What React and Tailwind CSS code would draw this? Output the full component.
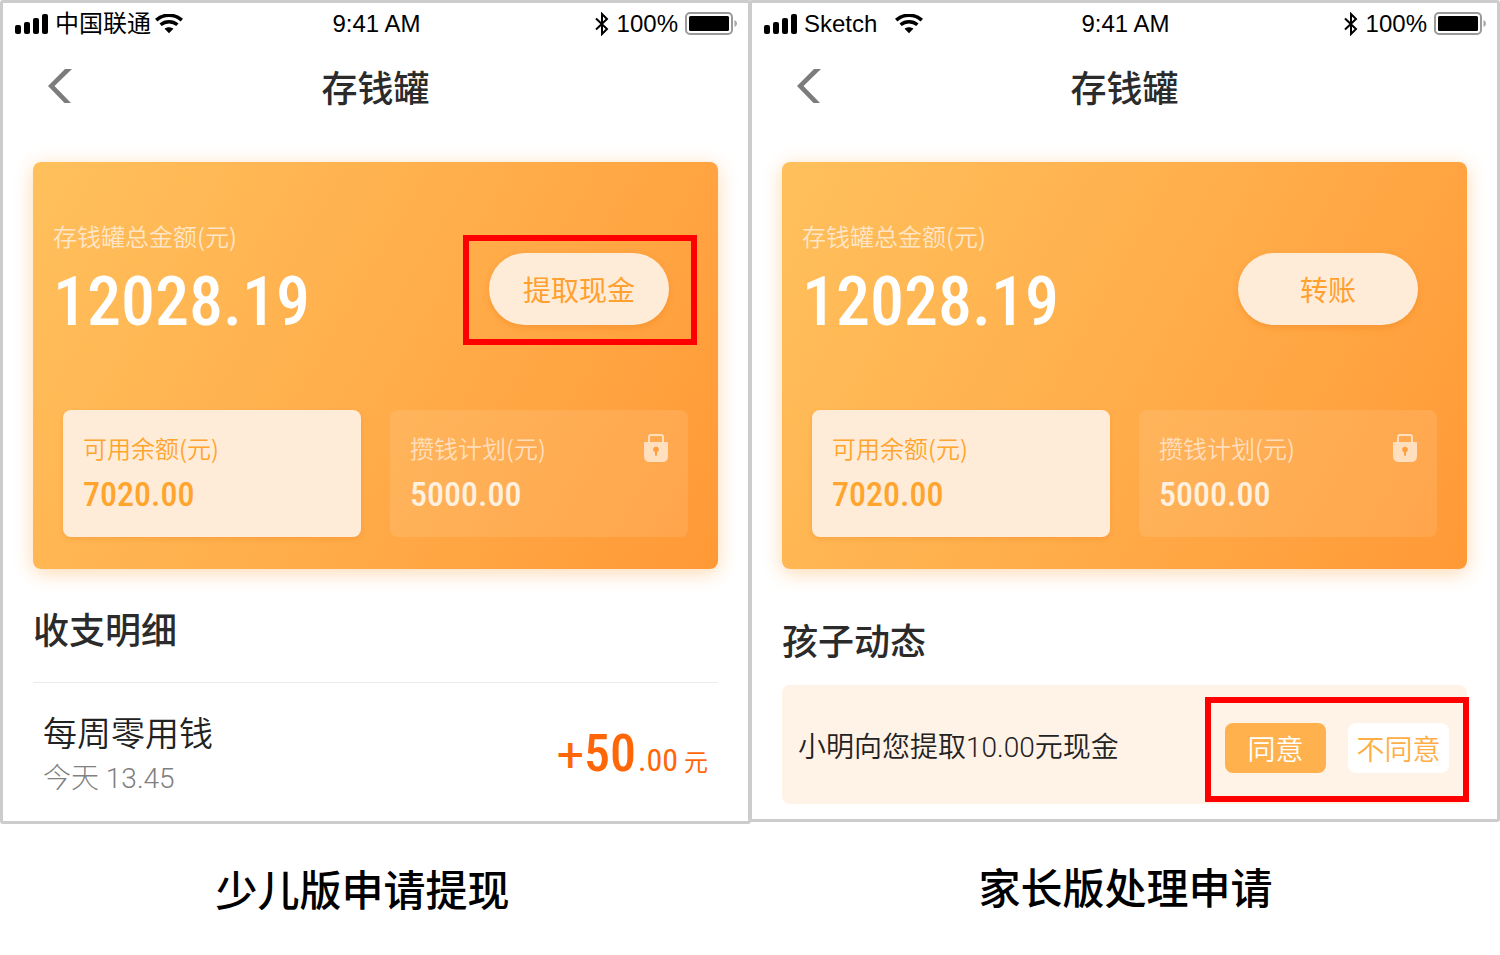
import React from 'react';

function SignalIcon() {
  return (
    <svg className="w-[34px] h-5" viewBox="0 0 34 20" aria-hidden="true">
      <rect x="0" y="11" width="6" height="9" rx="2" />
      <rect x="9" y="8" width="6" height="12" rx="2" />
      <rect x="18" y="4" width="6" height="16" rx="2" />
      <rect x="27" y="0" width="6" height="20" rx="2" />
    </svg>
  );
}

function WifiIcon() {
  return (
    <svg className="w-7 h-5" viewBox="0 0 28 20" aria-hidden="true">
      <path d="M1.2 6.2 C8.6 -0.4 19.4 -0.4 26.8 6.2" fill="none" stroke="#000" strokeWidth="3.6" />
      <path d="M5.6 10.8 C10.4 6.8 17.6 6.8 22.4 10.8" fill="none" stroke="#000" strokeWidth="3.4" />
      <path d="M9.6 14.8 C12 12.8 16 12.8 18.4 14.8 L14 19.2 Z" />
    </svg>
  );
}

function BluetoothIcon() {
  return (
    <svg className="w-4 h-6" viewBox="0 0 16 24" aria-hidden="true">
      <path d="M2 6.5 L13 17 L8 22 V2 L13 7 L2 17.5" fill="none" stroke="#000" strokeWidth="2" />
    </svg>
  );
}

function BatteryIcon() {
  return (
    <svg className="w-[53px] h-6" viewBox="0 0 53 24" aria-hidden="true">
      <rect x="1" y="1" width="46" height="21" rx="4" fill="none" stroke="#9a9a9a" strokeWidth="2" />
      <rect x="4" y="4" width="40" height="15" rx="1.5" />
      <path d="M49.5 8 C52.8 9.4 52.8 13.6 49.5 15 Z" fill="#a6a6a6" />
    </svg>
  );
}

function LockIcon() {
  return (
    <svg className="w-6 h-7" viewBox="0 0 24 28" aria-hidden="true">
      <path d="M5 9 V3 Q5 1 7 1 H17 Q19 1 19 3 V9" fill="none" stroke="#ffdfbd" strokeWidth="2" />
      <path d="M1 8 H23 Q24 8 24 9 V22 Q24 28 18 28 H6 Q0 28 0 22 V9 Q0 8 1 8 Z" fill="#ffdfbd" />
      <circle cx="12" cy="15.5" r="2.8" fill="#ff9f40" />
      <rect x="11" y="16" width="2" height="6" rx="1" fill="#ff9f40" />
    </svg>
  );
}

function StatusBar({ carrier, wide }) {
  return (
    <div className="h-[42px] grid grid-cols-3 items-center pl-3 pr-2.5 font-['Liberation_Sans','Noto_Sans_CJK_SC',sans-serif] text-2xl text-black">
      <div className={`flex items-center whitespace-nowrap ${wide ? 'gap-[18px]' : 'gap-1'}`}>
        <div className="flex items-center gap-1.5">
          <SignalIcon />
          <span>{carrier}</span>
        </div>
        <WifiIcon />
      </div>
      <span className="text-center">9:41 AM</span>
      <div className="flex items-center justify-end gap-[7px]">
        <BluetoothIcon />
        <span>100%</span>
        <BatteryIcon />
      </div>
    </div>
  );
}

function NavBar() {
  return (
    <header className="h-[82px] grid grid-cols-3 items-center">
      <button type="button" aria-label="返回" className="justify-self-start pl-[45px]">
        <svg className="w-6 h-[34px]" viewBox="0 0 24 34" aria-hidden="true">
          <path d="M0 17 L17 0 H24 L6.5 17 L23 34 H16.5 Z" fill="#7c7c7c" />
        </svg>
      </button>
      <h1 className="text-center text-4xl font-medium text-[#2b2b2b]">存钱罐</h1>
    </header>
  );
}

// Red frame drawn over whatever control it wraps
function Highlight({ className }) {
  return <span aria-hidden="true" className={`absolute border-[6px] border-[#ff0000] pointer-events-none ${className}`} />;
}

function BalanceCard({ action, highlighted }) {
  return (
    <section className="mx-[30px] mt-[35px] px-[30px] pt-[58px] pb-8 rounded-lg bg-[linear-gradient(120deg,#ffc05c_0%,#ffae4b_50%,#ff9936_100%)] shadow-[0_4px_20px_rgba(255,160,60,0.4)]">
      <div className="flex justify-between -ml-2.5 pr-[19px]">
        <div>
          <p className="text-2xl leading-8 font-[350] text-[#ffe6c8]">存钱罐总金额(元)</p>
          <p className="mt-[18px] text-[68px] leading-[64px] font-medium text-white font-['Roboto_Condensed',Roboto,sans-serif]">12028.19</p>
        </div>
        <div className="relative mt-[33px] h-[72px]">
          <button type="button" className="w-[180px] h-[72px] rounded-full bg-[#ffecd8] text-[28px] leading-[70px] text-[#ffa02f] shadow-[0_3px_6px_rgba(230,120,20,0.3)]">
            {action}
          </button>
          {highlighted && <Highlight className="-left-[26px] -right-7 -top-[18px] -bottom-5" />}
        </div>
      </div>

      <div className="mt-[76px] grid grid-cols-2 gap-[29px]">
        <div className="h-[127px] px-5 pt-[22px] rounded-lg bg-[#ffecd8] text-[#ffa42c] shadow-[0_2px_5px_rgba(230,120,20,0.25)]">
          <p className="text-2xl leading-8 font-[350]">可用余额(元)</p>
          <p className="mt-2.5 text-[34px] leading-10 font-medium font-['Roboto_Condensed',Roboto,sans-serif]">7020.00</p>
        </div>
        <div className="h-[127px] px-5 pt-[22px] rounded-lg bg-white/10">
          <div className="flex items-center justify-between">
            <p className="text-2xl leading-8 font-[350] text-[#ffdfbd]">攒钱计划(元)</p>
            <LockIcon />
          </div>
          <p className="mt-2.5 text-[34px] leading-10 font-medium text-[#fff1e0] font-['Roboto_Condensed',Roboto,sans-serif]">5000.00</p>
        </div>
      </div>
    </section>
  );
}

function Phone({ children }) {
  return (
    <div className="border-[3px] border-[#cccccc] rounded-[3px] bg-white">
      {children}
    </div>
  );
}

function ChildScreen() {
  return (
    <Phone>
      <StatusBar carrier="中国联通" />
      <NavBar />
      <BalanceCard action="提取现金" highlighted />

      <section className="mx-[30px]">
        <h2 className="mt-8 text-4xl leading-[54px] font-medium text-[#2b2b2b]">收支明细</h2>
        <div className="mt-[27px] border-t border-[#ebebeb] px-2.5 pt-[29px] pb-6 flex items-start justify-between">
          <div>
            <p className="text-[34px] leading-10 font-[350] text-[#222222]">每周零用钱</p>
            <p className="mt-[9px] text-[28px] leading-9 font-light text-[#808080] font-['Roboto','Noto_Sans_CJK_SC',sans-serif]">今天 13.45</p>
          </div>
          <p className="h-[76px] pt-1.5 flex items-baseline text-[#ff6608] font-['Roboto_Condensed','Noto_Sans_CJK_SC',sans-serif]">
            <span className="text-5xl leading-[72px] font-['Roboto',sans-serif]">+</span>
            <span className="text-[52px] leading-[72px] font-medium">50</span>
            <span className="pl-0.5 text-[32px]">.00</span>
            <span className="pl-1.5 text-2xl">元</span>
          </p>
        </div>
      </section>
    </Phone>
  );
}

function ParentScreen() {
  return (
    <Phone>
      <StatusBar carrier="Sketch" wide />
      <NavBar />
      <BalanceCard action="转账" />

      <section className="mx-[30px] pb-[15px]">
        <h2 className="mt-[43px] text-4xl leading-[54px] font-medium text-[#2b2b2b]">孩子动态</h2>
        <div className="mt-[19px] h-[119px] pl-4 pr-[18px] pt-1.5 rounded-lg bg-[#fff2e6] flex items-center justify-between">
          <p className="text-[28px] leading-10 font-[350] text-[#222222] font-['Roboto','Noto_Sans_CJK_SC',sans-serif]">小明向您提取10.00元现金</p>
          <div className="relative flex gap-[22px]">
            <button type="button" className="w-[101px] h-[50px] rounded-lg bg-[#ffb14d] text-[28px] leading-[50px] font-[350] text-white">同意</button>
            <button type="button" className="w-[101px] h-[50px] rounded-lg bg-white text-[28px] leading-[50px] font-[350] text-[#ffad45]">不同意</button>
            <Highlight className="-inset-x-5 -top-[26px] -bottom-[29px]" />
          </div>
        </div>
      </section>
    </Phone>
  );
}

export default function App() {
  return (
    <main className="flex items-start bg-white font-['Noto_Sans_CJK_SC',sans-serif]">
      <figure className="flex-1">
        <ChildScreen />
        <figcaption className="mt-[34px] pr-[26px] text-center text-[42px] leading-[60px] font-medium text-black">少儿版申请提现</figcaption>
      </figure>
      <figure className="flex-1 -ml-0.5">
        <ParentScreen />
        <figcaption className="mt-[34px] pl-0.5 text-center text-[42px] leading-[60px] font-medium text-black">家长版处理申请</figcaption>
      </figure>
    </main>
  );
}
